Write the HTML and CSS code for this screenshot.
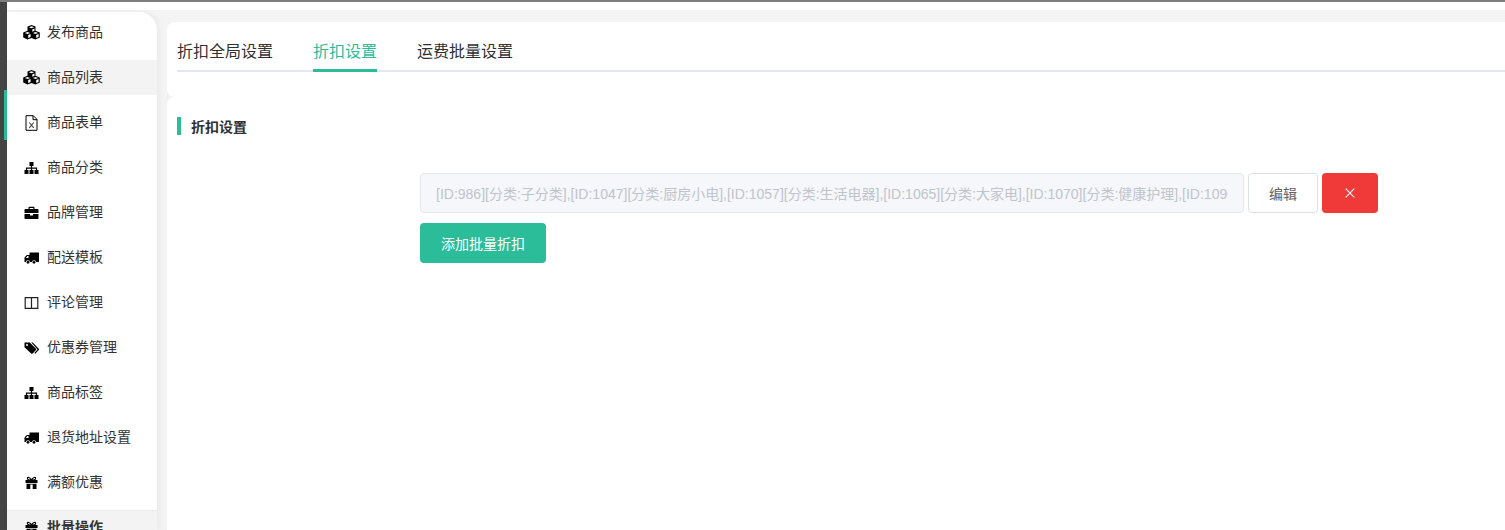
FILE: index.html
```html
<!DOCTYPE html>
<html lang="zh-CN">
<head>
  <meta charset="UTF-8" />
  <title>折扣设置</title>
  <link rel="stylesheet" href="styles.css">
</head>
<body>
  <!-- icon set for the side menu -->
  <svg class="icon-defs" xmlns="http://www.w3.org/2000/svg">
    <symbol id="i-cubes" viewBox="0 0 17 16">
      <path d="M8.500 0l4 1.500v4.300l4.300 1.600v5.200L12.400 14.500 8.500 12.900 4.600 14.500 .2 12.600V7.400l4.300-1.600V1.500z"/>
      <path fill="#fff" d="M8.500 1.200l2.600 1-2.600 1-2.600-1zM4.500 7l2.600 1-2.600 1-2.600-1zM12.500 7l2.600 1-2.600 1-2.600-1zM9.300 4.500l2.200-.9v2.200L9.300 6.700zM5.200 10l2.400-1v2.900l-2.400 1zM13.200 10l2.400-1v2.900l-2.400 1z"/>
    </symbol>
    <symbol id="i-file-excel" viewBox="0 0 16 16">
      <path fill="none" stroke="#000" stroke-width="1" d="M2.500 .7h7.300l3.700 3.700v10.900H2.500zM9.500 .7v4h4"/>
      <path stroke="#444" stroke-width="1.100" d="M5.800 7.500l4.400 5.300M10.200 7.500l-4.400 5.300"/>
    </symbol>
    <symbol id="i-sitemap" viewBox="0 0 16 16">
      <path d="M6 2h4v4H8.600v1.600h5v2.400h1.400v4h-4v-4h1.400V8.800H8.600V10H10v4H6v-4h1.400V8.800H3.600V10H5v4H1v-4h1.400V7.600h5V6H6z"/>
    </symbol>
    <symbol id="i-briefcase" viewBox="0 0 16 16">
      <path d="M5 4V2.600C5 2 5.500 1.700 6 1.700h4c.5 0 1 .3 1 .9V4h3c.6 0 1 .4 1 1v3H1V5c0-.6.4-1 1-1zm1.200 0h3.600V2.900H6.200zM1 9h5.500v1.500h3V9H15v4c0 .6-.4 1-1 1H2c-.6 0-1-.4-1-1z"/>
    </symbol>
    <symbol id="i-truck" viewBox="0 0 16 16">
      <path d="M6 2.500h9.500V12h-2.800a2.200 2.200 0 0 0-4.300 0H6.600a2.200 2.200 0 0 0-4.300 0H1V7.500l2.300-2.600H6zM2.300 8H5V6.100H3.900z" fill-rule="evenodd"/>
      <circle cx="4.500" cy="12.300" r="1.400"/>
      <circle cx="10.500" cy="12.300" r="1.400"/>
    </symbol>
    <symbol id="i-columns" viewBox="0 0 16 16">
      <path fill="none" stroke="#222" stroke-width="1.200" d="M1.700 2.700h12.600v10.600H1.700zM8 2.700v10.600"/>
    </symbol>
    <symbol id="i-tags" viewBox="0 0 16 16">
      <path d="M1 2.500h5.300l6.200 6.200a1 1 0 0 1 0 1.400l-3.400 3.400a1 1 0 0 1-1.400 0L1 7.300zM3.500 4a1 1 0 1 0 0 2 1 1 0 0 0 0-2z" fill-rule="evenodd"/>
      <path d="M7.800 2.500h1.400l6.100 6.200a1 1 0 0 1 0 1.400l-3.600 3.700-.9-.9 3.200-3.500z"/>
    </symbol>
    <symbol id="i-gift" viewBox="0 0 16 16">
      <path d="M2 5h12v3H2zM3 8.800h10V14H9.200V9.500H6.800V14H3z"/>
      <path fill="none" stroke="#000" stroke-width="1.200" d="M8 5C6.500 2 3.800 1.800 3.900 3.500 4 4.800 6 5 8 5c2 0 4-.2 4.100-1.500C12.200 1.800 9.500 2 8 5z"/>
    </symbol>
  </svg>

  <div class="topline"></div>
  <div class="layout">
    <div class="rail"><span class="rail-mark"></span></div>
    <div class="workspace">
      <aside class="sidebar">
        <ul class="menu">
          <li class="menu-item"><svg class="menu-icon"><use href="#i-cubes"/></svg>发布商品</li>
          <li class="menu-item active"><svg class="menu-icon"><use href="#i-cubes"/></svg>商品列表</li>
          <li class="menu-item"><svg class="menu-icon"><use href="#i-file-excel"/></svg>商品表单</li>
          <li class="menu-item"><svg class="menu-icon"><use href="#i-sitemap"/></svg>商品分类</li>
          <li class="menu-item"><svg class="menu-icon"><use href="#i-briefcase"/></svg>品牌管理</li>
          <li class="menu-item"><svg class="menu-icon"><use href="#i-truck"/></svg>配送模板</li>
          <li class="menu-item"><svg class="menu-icon"><use href="#i-columns"/></svg>评论管理</li>
          <li class="menu-item"><svg class="menu-icon"><use href="#i-tags"/></svg>优惠券管理</li>
          <li class="menu-item"><svg class="menu-icon"><use href="#i-sitemap"/></svg>商品标签</li>
          <li class="menu-item"><svg class="menu-icon"><use href="#i-truck"/></svg>退货地址设置</li>
          <li class="menu-item"><svg class="menu-icon"><use href="#i-gift"/></svg>满额优惠</li>
          <li class="menu-item current"><svg class="menu-icon"><use href="#i-gift"/></svg>批量操作</li>
        </ul>
      </aside>

      <main class="content">
        <section class="card tabs-card">
          <div class="tabs">
            <a class="tab">折扣全局设置</a>
            <a class="tab active">折扣设置</a>
            <a class="tab">运费批量设置</a>
          </div>
        </section>
        <section class="card form-card">
          <h2 class="section-title">折扣设置</h2>
          <div class="discount-form">
            <div class="discount-row">
              <input class="discount-input" type="text" disabled value="[ID:986][分类:子分类],[ID:1047][分类:厨房小电],[ID:1057][分类:生活电器],[ID:1065][分类:大家电],[ID:1070][分类:健康护理],[ID:1090][分类:个人护理]">
              <button class="btn btn-edit">编辑</button>
              <button class="btn btn-delete" aria-label="删除">
                <svg class="close-icon" viewBox="0 0 10 10"><path d="M.7 .7l8.600 8.600M9.300 .7L.7 9.300"/></svg>
              </button>
            </div>
            <button class="btn btn-add">添加批量折扣</button>
          </div>
        </section>
      </main>
    </div>
  </div>
</body>
</html>
```

FILE: styles.css
```css
:root {
  --accent: #2bbc9a;
  --page-bg: #f4f4f4;
  --line: #e4e7ed;
}

* {
  margin: 0;
  padding: 0;
  box-sizing: border-box;
}

html, body {
  height: 100%;
  overflow: hidden;
}

body {
  font-family: "Liberation Sans", "Noto Sans CJK SC", sans-serif;
  font-size: 14px;
  color: #303133;
  background: #fff;
}

.icon-defs {
  display: none;
}

.topline {
  height: 2px;
  background: #7f7f7f;
}

.layout {
  display: flex;
  height: 528px;
}

.rail {
  flex: 0 0 7px;
  background: #444;
  padding: 88px 0 0 4px;
}

.rail-mark {
  display: block;
  width: 3px;
  height: 50px;
  background: var(--accent);
}

.workspace {
  flex: 1;
  display: flex;
  min-width: 0;
  margin-top: 8px;
  background: var(--page-bg);
}

/* side menu */
.sidebar {
  flex: 0 0 150px;
  margin-top: 2px;
  padding-top: 3px;
  background: #fff;
  border-top-right-radius: 18px;
  box-shadow: 2px 0 6px rgba(0,0,0,0.05);
  overflow: hidden;
}

.menu {
  list-style: none;
}

.menu-item {
  display: flex;
  align-items: center;
  height: 35px;
  margin-bottom: 10px;
  padding: 0 0 4px 16px;
  font-size: 14px;
  color: #333;
  white-space: nowrap;
}

.menu-item.active {
  background: #f3f3f3;
}

.menu-item.current {
  background: #f3f3f3;
  border-top: 1px solid #ebebf0;
  font-weight: 700;
}

.menu-icon {
  flex: 0 0 17px;
  width: 17px;
  height: 16px;
  margin: 4px 7px 0 0;
}

/* main column */
.content {
  display: flex;
  flex-direction: column;
  flex: 1;
  min-width: 0;
  padding: 12px 0 0 10px;
}

.card {
  background: #fff;
}

.tabs-card {
  height: 75px;
  padding: 10px 0 0 10px;
  border-radius: 8px 0 0 8px;
}

.tabs {
  display: flex;
  gap: 40px;
  height: 40px;
  border-bottom: 2px solid var(--line);
}

.tab {
  height: 40px;
  font-size: 16px;
  line-height: 40px;
  color: #303133;
}

.tab.active {
  color: var(--accent);
  border-bottom: 3px solid var(--accent);
}

.form-card {
  flex: 1;
  padding: 20px 0 0 10px;
  border-top-left-radius: 8px;
}

.section-title {
  height: 18px;
  padding-left: 10px;
  border-left: 4px solid var(--accent);
  font-size: 14px;
  font-weight: 700;
  line-height: 20px;
  color: #303133;
}

.discount-form {
  margin: 38px 0 0 243px;
}

.discount-row {
  display: flex;
  gap: 4px;
  margin-bottom: 10px;
}

.discount-input {
  width: 824px;
  height: 40px;
  padding: 0 15px;
  border: 1px solid var(--line);
  border-radius: 4px;
  background: #f5f7fa;
  color: #c0c4cc;
  font: 14px "Liberation Sans", "Noto Sans CJK SC", sans-serif;
}

.btn {
  height: 40px;
  border: 1px solid transparent;
  border-radius: 4px;
  font-family: inherit;
  font-size: 14px;
}

.btn-edit {
  width: 70px;
  background: #fff;
  border-color: #dcdfe6;
  color: #606266;
}

.btn-delete {
  display: flex;
  align-items: center;
  justify-content: center;
  width: 56px;
  background: #f03a3a;
}

.close-icon {
  width: 10px;
  height: 10px;
  fill: none;
  stroke: #fff;
  stroke-width: 1.100;
}

.btn-add {
  display: block;
  width: 126px;
  background: var(--accent);
  color: #fff;
}
```
